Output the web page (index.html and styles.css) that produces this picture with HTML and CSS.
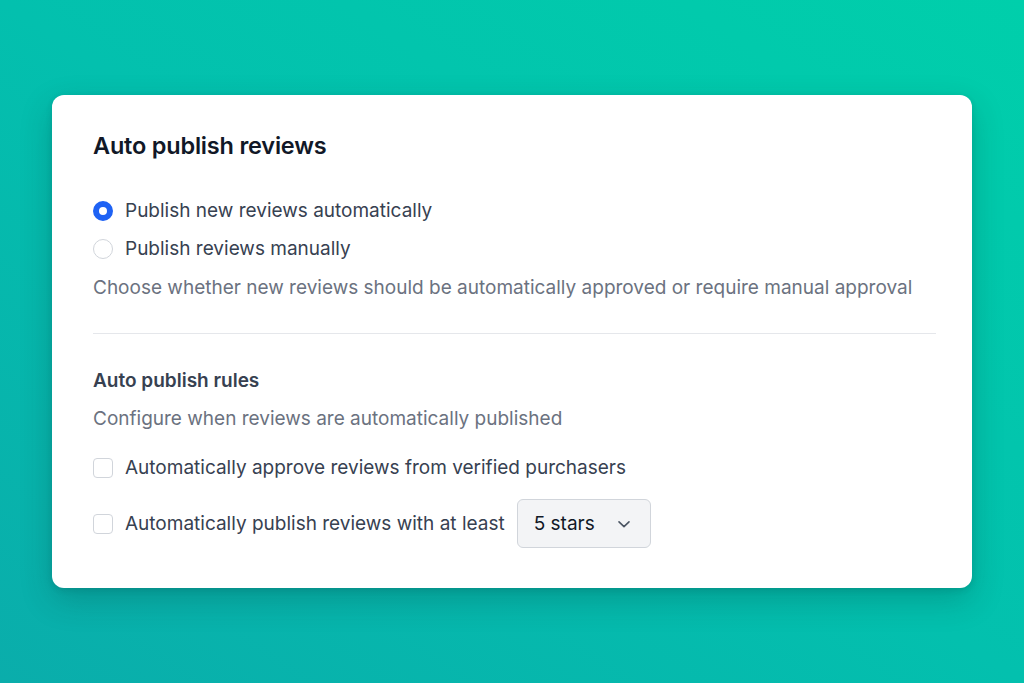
FILE: index.html
```html
<!DOCTYPE html>
<html lang="en">
<head>
<meta charset="utf-8">
<title>Auto publish reviews</title>
<link rel="stylesheet" href="styles.css">
</head>
<body>
<main class="stage">
  <section class="card">
    <h1 class="title">Auto publish reviews</h1>
    <div class="options">
      <label class="row"><span class="radio checked"></span><span>Publish new reviews automatically</span></label>
      <label class="row"><span class="radio"></span><span>Publish reviews manually</span></label>
    </div>
    <p class="hint">Choose whether new reviews should be automatically approved or require manual approval</p>
    <hr class="divider">
    <h2 class="subtitle">Auto publish rules</h2>
    <p class="hint sub">Configure when reviews are automatically published</p>
    <label class="row check-row first"><span class="checkbox"></span><span>Automatically approve reviews from verified purchasers</span></label>
    <div class="row check-row second">
      <span class="checkbox"></span><span>Automatically publish reviews with at least</span>
      <span class="select"><span>5 stars</span>
        <svg class="chev" width="14" height="14" viewBox="0 0 14 14"><path d="M2 4.8 L7 9.6 L12 4.8" fill="none" stroke="#4b5563" stroke-width="1.6" stroke-linecap="round" stroke-linejoin="round"/></svg>
      </span>
    </div>
  </section>
</main>
</body>
</html>
```
FILE: styles.css
```css
html, body {
  margin: 0;
  padding: 0;
  height: 100%;
}
body {
  font-family: Inter, "Noto Sans", sans-serif;
  background: linear-gradient(to top right, #0aadab 0%, #03c0ae 50%, #00cfab 100%);
  overflow: hidden;
}
.stage {
  padding: 95px 52px 0 52px;
}
.card {
  background: #ffffff;
  border-radius: 12px;
  padding: 36px 36px 40px 41px;
  box-shadow: 0 12px 32px rgba(0, 40, 40, 0.22), 0 2px 6px rgba(0, 40, 40, 0.12);
  box-sizing: border-box;
  width: 920px;
}
.title {
  margin: 0;
  font-size: 23.5px;
  line-height: 30px;
  font-weight: 600;
  color: #111827;
  letter-spacing: -0.2px;
}
.options {
  margin-top: 36px;
  display: flex;
  flex-direction: column;
  gap: 10px;
}
.row {
  display: flex;
  align-items: center;
  gap: 12px;
  font-size: 19px;
  line-height: 28px;
  color: #374151;
}
.radio {
  width: 20px;
  height: 20px;
  border-radius: 50%;
  border: 1px solid #d1d5db;
  box-sizing: border-box;
  background: #fff;
  flex: none;
}
.radio.checked {
  border: 6px solid #1e62f4;
  background: #fff;
}
.hint {
  margin: 11px 0 0 0;
  font-size: 19px;
  line-height: 28px;
  color: #6b7280;
}
.divider {
  margin: 31px 0 0 0;
  border: 0;
  border-top: 1px solid #e5e7eb;
  height: 0;
}
.subtitle {
  margin: 34px 0 0 0;
  font-size: 19px;
  line-height: 26px;
  font-weight: 600;
  color: #374151;
}
.hint.sub {
  margin-top: 11px;
}
.checkbox {
  width: 20px;
  height: 20px;
  border: 1px solid #d1d5db;
  border-radius: 4px;
  box-sizing: border-box;
  background: #fff;
  flex: none;
}
.check-row.first {
  margin-top: 21px;
}
.check-row.second {
  margin-top: 17px;
}
.select {
  display: flex;
  align-items: center;
  justify-content: space-between;
  width: 134px;
  height: 49px;
  box-sizing: border-box;
  padding: 0 19px 0 16px;
  background: #f3f4f6;
  border: 1px solid #d1d5db;
  border-radius: 6px;
  color: #111827;
  font-size: 19px;
}
.chev {
  display: block;
}
```
